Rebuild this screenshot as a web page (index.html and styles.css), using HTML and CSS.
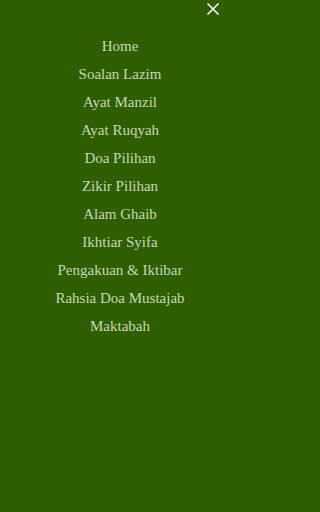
FILE: index.html
```html
<!DOCTYPE html>
<html lang="ms">
<head>
<meta charset="utf-8">
<meta name="viewport" content="width=device-width, initial-scale=1">
<link rel="stylesheet" href="styles.css">
</head>
<body>
<nav class="menu">
  <button class="close" aria-label="Tutup">
    <svg viewBox="0 0 14 14" width="14" height="14"><path d="M1.5 1.5L12.5 12.5M12.5 1.5L1.5 12.5" stroke="#ffffff" stroke-width="1.5" fill="none"/></svg>
  </button>
  <ul class="links">
    <li><a href="#">Home</a></li>
    <li><a href="#">Soalan Lazim</a></li>
    <li><a href="#">Ayat Manzil</a></li>
    <li><a href="#">Ayat Ruqyah</a></li>
    <li><a href="#">Doa Pilihan</a></li>
    <li><a href="#">Zikir Pilihan</a></li>
    <li><a href="#">Alam Ghaib</a></li>
    <li><a href="#">Ikhtiar Syifa</a></li>
    <li><a href="#">Pengakuan &amp; Iktibar</a></li>
    <li><a href="#">Rahsia Doa Mustajab</a></li>
    <li><a href="#">Maktabah</a></li>
  </ul>
</nav>
</body>
</html>
```
FILE: styles.css
```css
html, body {
  margin: 0;
  padding: 0;
  height: 100%;
}
body {
  background: #2e5e00;
  font-family: "Liberation Serif", "DejaVu Serif", serif;
}
.menu {
  position: relative;
  width: 240px;
  min-height: 512px;
  padding-top: 32px;
  box-sizing: border-box;
}
.close {
  position: absolute;
  top: 2px;
  right: 20px;
  background: none;
  border: 0;
  padding: 0;
  width: 14px;
  height: 14px;
  display: flex;
}
.links {
  list-style: none;
  margin: 0;
  padding: 0;
  display: flex;
  flex-direction: column;
  align-items: center;
}
.links li {
  height: 28px;
  display: flex;
  align-items: center;
}
.links a {
  color: #c6d9b3;
  text-decoration: none;
  font-size: 15px;
}
```
